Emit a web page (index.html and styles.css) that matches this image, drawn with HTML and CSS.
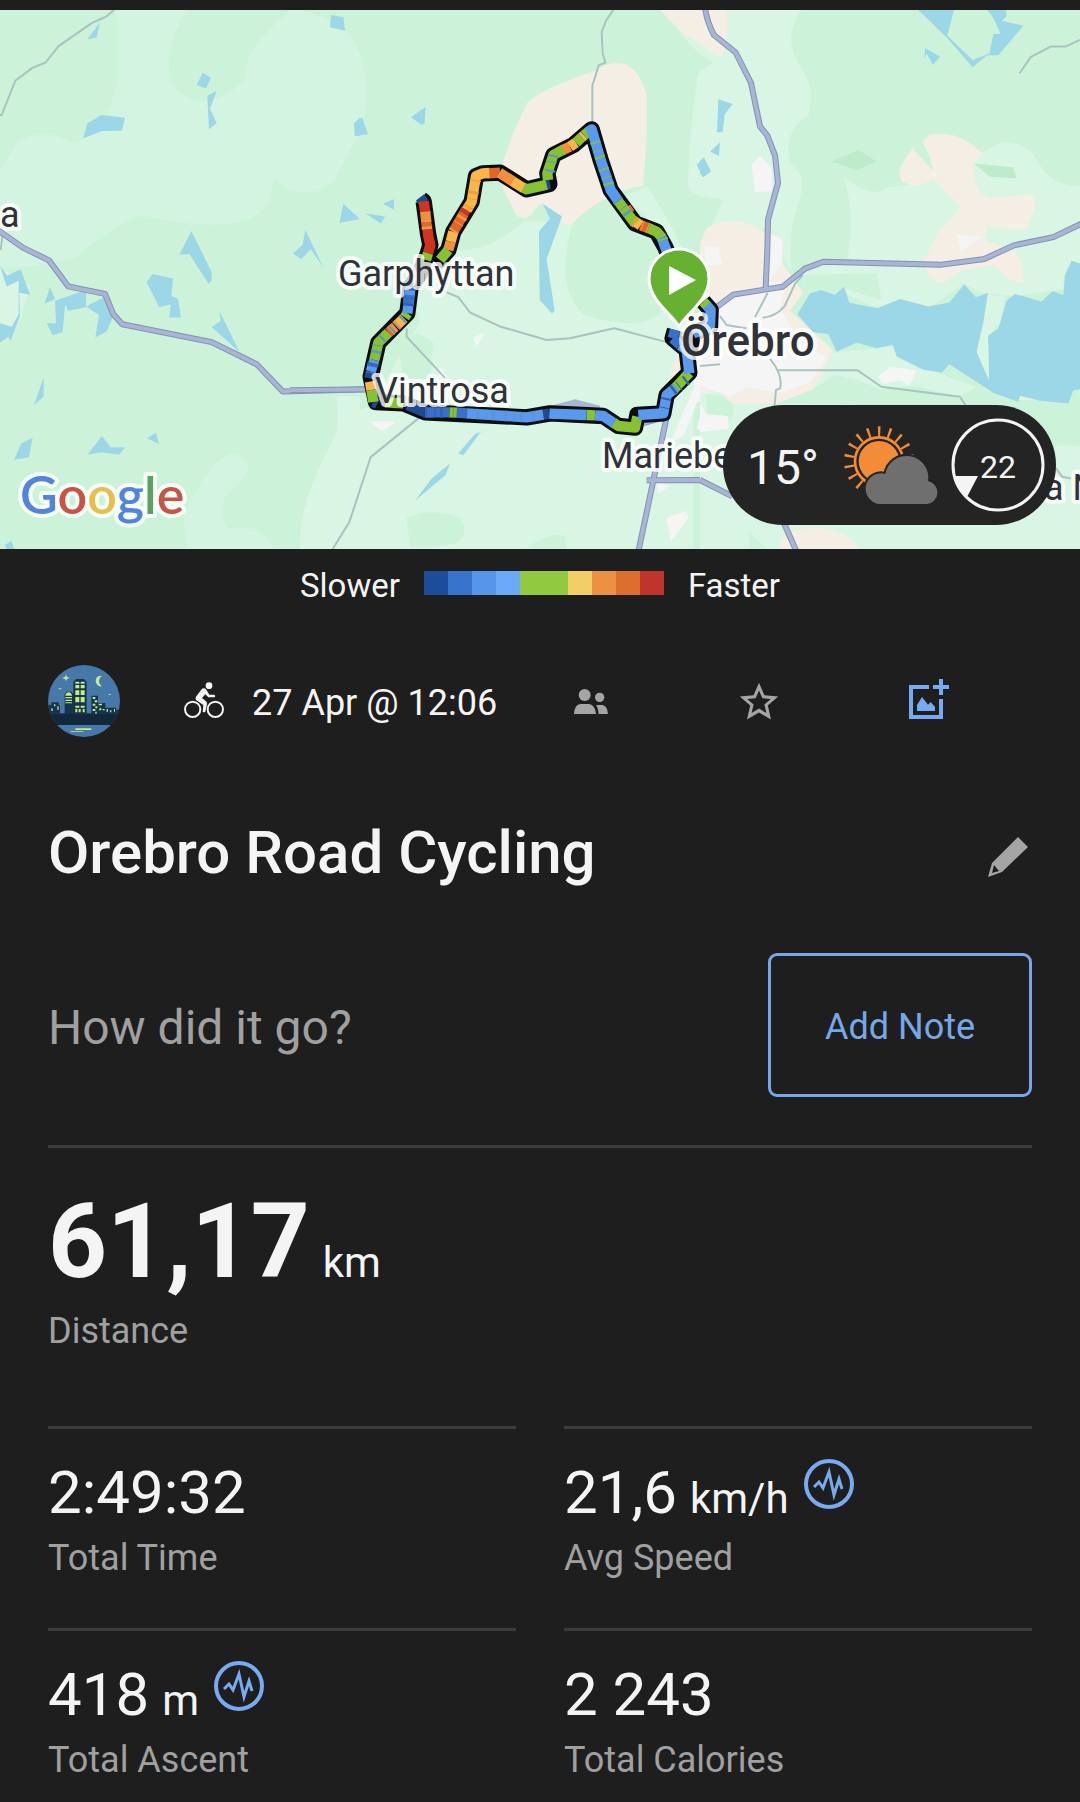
FILE: index.html
```html
<!DOCTYPE html>
<html lang="en">
<head>
    <meta charset="UTF-8">
    <meta name="viewport" content="width=device-width, initial-scale=1.0">
    <title>Orebro Road Cycling</title>
    <link rel="stylesheet" href="styles.css">
</head>
<body>
    <section class="map">
        <svg class="map-canvas" viewBox="0 10 1080 539" preserveAspectRatio="xMidYMid slice" role="img" aria-label="Route map">
            <rect class="forest" x="0" y="10" width="1080" height="539"/>

            <!-- west -->
            <g transform="scale(.33333 .35714)">
                <path class="field-soft" d="M345 28Q370 200 330 300Q290 380 220 400Q120 350 50 400L0 480V750Q120 750 230 720Q350 620 430 605Q600 640 700 625Q820 610 820 500Q900 570 1000 510Q1060 400 1080 380Q1130 200 1050 100Q1000 50 900 28H870Q720 150 730 230Q600 330 520 240Q480 150 560 28z"/>
                <path class="field" d="M0 750L90 800L60 900L0 960zM1080 1110H1010Q1030 1250 950 1330Q900 1420 900 1537H1080z"/>
                <path class="field-soft" d="M550 1440Q640 1270 700 1270Q780 1290 720 1350Q640 1400 680 1480Q800 1470 820 1537H560z"/>
                <path class="water" d="M262 110L300 62L290 105zM993 42L1030 48L1035 86L990 76zM608 204L633 218L618 248L590 238zM622 268L650 255L630 305L650 345L627 362zM249 388L262 346L304 322L375 330L366 366L306 367zM1062 345L1080 330V380H1068zM1030 571L1078 614L1019 624zM574 647L635 762V785L626 795L568 711L538 713zM916 644L970 748L932 698L904 726L879 710L908 685zM440 790L457 767L519 780L514 828L534 837L543 889H508L512 852L478 860zM658 870L718 985L635 916L662 898zM0 745L22 772L62 754L90 825L58 820L60 885L32 955L24 943L0 960V905L35 915L56 880V786L20 802zM150 803L165 838L134 850zM165 842L258 812V860L205 870L195 852L188 930L158 938L140 905L168 905zM258 858L312 832L340 885L320 928L286 945L297 882zM131 1056V1110L102 1134zM64 1242L98 1226L87 1280L42 1288zM262 1273L306 1221L332 1252H375L358 1273L306 1266zM441 1227L468 1212L477 1243zM15 1525L35 1515L42 1537H20z"/>
                <path class="trail" d="M342 28L318 47L276 64L175 130L137 175L97 190L46 226L5 322H0M8 655L2 700"/>
                <path class="road-edge" d="M-5 645L70 694L147 729L205 802L315 823L340 880L367 908L635 958L770 1020L848 1096L1110 1090"/>
                <path class="road" d="M-5 645L70 694L147 729L205 802L315 823L340 880L367 908L635 958L770 1020L848 1096L1110 1090"/>
            </g>

            <!-- centre -->
            <g transform="translate(300) scale(.33333 .35714)">
                <path class="field" d="M400 700Q560 720 670 620L820 620Q1000 540 1040 520Q1100 600 1180 760V1537H0Q0 1400 100 1230Q130 1150 210 1140L360 900Q330 800 400 700zM1190 210Q1240 160 1320 180V560Q1200 560 1165 530Q1160 430 1190 210zM940 28H1320V200Q1180 180 1100 28z"/>
                <path class="forest" d="M820 620Q760 800 850 880Q1000 930 1080 880L1090 700Q1040 560 930 560zM320 1450Q400 1420 480 1450Q510 1490 470 1520Q390 1540 330 1530zM680 1537Q740 1490 795 1500L800 1537zM300 1000Q330 900 400 960L390 1060H310zM940 28H1080Q1150 100 1195 200Q1160 430 1165 530L1040 520V270Q1000 130 916 176z"/>
                <path class="sand" d="M880 200Q1000 130 1040 265V370L1030 520Q960 530 910 560Q850 590 820 625Q790 635 770 610L720 570L690 605Q650 620 640 585L610 530V450L640 370L680 290Q720 250 880 200zM1080 28H1270L1280 110L1260 160Q1190 110 1150 95zM1220 650Q1260 610 1320 625V1140Q1290 1130 1250 1060L1120 1080Q1100 1020 1140 990L1240 900z"/>
                <path class="town" d="M1215 688L1255 690L1262 740L1320 780V1110L1280 1080L1240 1100L1190 1130L1150 1220L1110 1240L1180 1090L1200 980L1240 860zM1190 1200L1215 1120L1320 1160V1205H1200zM520 945L555 930L530 970zM210 1180L290 1180L245 1208zM420 1025L445 1060L410 1060zM1070 1350L1110 1360L1075 1382zM1100 1450L1160 1430L1165 1450L1112 1518z"/>
                <path class="water" d="M186 328L204 376L164 381L163 350zM377 299L374 345L365 350L333 328zM130 571L178 612L119 624zM282 558V588L249 570zM197 598L255 606L243 626zM727 570L786 606L740 725L764 870L756 878L719 840L717 648L750 612zM1254 278L1298 291L1274 330L1270 370H1252zM1260 398L1257 437L1231 424zM1212 441L1233 480L1210 496L1190 462zM450 1298L437 1330L345 1402L395 1340zM565 1203L540 1212L490 1275L475 1270L525 1215z"/>
                <path class="trail" d="M940 28L918 58L905 90L908 150L916 175L896 183L877 240V345M390 800L475 832L510 875L600 914L740 952L810 947L943 919L1100 958M320 920V943L435 1058M360 1168L212 1280L148 1462L98 1537"/>
                <path class="road-edge" d="M1215 20L1240 95L1305 145M-30 1093L210 1090M1104 1150L1015 1545M1040 1345L1213 1344L1320 1400M1030 1185L1104 1165"/>
                <path class="road" d="M1215 20L1240 95L1305 145M-30 1093L210 1090M1104 1150L1015 1545M1040 1345L1213 1344L1320 1400M1030 1185L1104 1165"/>
                <path class="bypass" d="M745 1138L825 1118L900 1136V1150H745z"/>
            </g>

            <!-- east -->
            <g transform="translate(700) scale(.33333 .35714)">
                <path class="field" d="M50 28H305Q240 110 310 200Q345 250 325 325Q250 360 270 460Q325 490 300 550Q260 660 275 760L200 640L20 660L80 540L0 550V200L80 150zM430 495Q520 560 560 525Q640 520 700 500L900 400Q950 390 1000 430Q1050 530 1140 518V740Q1090 730 1090 810L940 830L850 820L790 795L690 860L600 840L530 860L450 830Q400 780 310 800L300 750L440 735Q470 600 430 495zM280 960L380 990L580 970L700 1040L850 1090L1140 1130V1537H0V1100H230z"/>
                <path class="forest" d="M230 1130Q350 1090 400 1050Q480 1060 540 1090L640 1080L780 1110L850 1070L950 1120L1140 1120V1250Q1080 1240 1040 1260L900 1140zM300 770L530 765L545 840L440 810L320 810zM20 1105L100 1110V1160L85 1180L20 1160zM148 1490L200 1537H148z"/>
                <path class="grove" d="M396 453L475 420L530 452L470 477zM822 458L940 468L950 500L870 495z"/>
                <path class="sand" d="M0 28H80Q90 90 65 160L0 95zM660 400L690 376Q760 370 800 395L848 428L820 460Q820 540 870 555L990 543Q1010 550 1005 580L980 640Q950 650 865 633L850 670L940 700Q980 740 965 790L930 785L880 740L780 760L735 790L690 780L670 730L715 650L770 595L780 575L735 535L700 500Q660 530 610 512Q590 490 605 460L640 412zM20 640Q60 610 140 625Q230 650 250 740L310 820L270 870L400 980L340 1090L230 1130H95L60 1100L0 1100V680zM240 1510Q310 1460 400 1485Q460 1500 475 1537H240z"/>
                <path class="forest" d="M665 392L640 418L700 480L690 440z"/>
                <path class="town" d="M155 460L180 436L215 470V535L165 538zM15 690H55L65 740L15 745zM210 655L248 670L245 740L200 790L260 790L240 860L300 960L380 1000L330 1070L240 1100L180 1090L140 1085L90 1110L0 1080V850L60 850L110 820L200 800zM0 1130L20 1160L85 1165V1200L0 1210zM770 657L845 663L785 703zM533 1055L570 1027L650 1037L628 1080L600 1065L550 1075zM695 484L710 484L704 497z"/>
                <path class="water" d="M655 28H762L742 100L818 168L868 150L880 95H902L880 50L862 28H918L920 45L905 58L970 72L895 155L862 155L818 188L740 105zM676 135L720 158L699 182L680 150L672 165zM292 880L330 822L362 812L405 825L432 803L448 848L533 863L600 837L685 858L748 847L793 796L828 832L864 820L850 900L830 985L867 1065L864 940L895 920L920 842L945 823L1025 844L1058 815L1090 827L1095 770L1115 730L1140 738V1090L1120 1093L1105 1130L1020 1122L960 1108L955 1125L880 1100L748 1020L726 1043L670 1035L590 998L578 965L530 975L470 960L410 985L385 935L340 930zM55 278L98 291L74 320L68 370H51zM60 398L57 437L31 424zM12 441L33 480L10 496L0 485V450z"/>
                <path class="field" d="M864 825L915 830L900 905L864 940L867 1065L830 985L852 900z"/>
                <path class="trail" d="M1140 112L1098 130H1053L992 160L959 205M308 770L285 795L254 857Q230 885 188 890M203 820L165 888M60 885L80 910L140 920M210 1005Q250 1050 240 1088L228 1092L223 1140M230 1037H473L544 1083L780 1111L800 1140M0 1025L60 1020M1067 1310L1087 1335L1112 1340"/>
                <path class="road-edge" d="M15 20Q20 60 42 98L107 147L153 232L180 354L202 380L225 435L234 512L204 615L202 700L197 805M50 860L100 825L248 803L315 752L370 733L725 741L853 725L942 687L1060 664L1145 626M0 1344L97 1390M240 1440L290 1545"/>
                <path class="road" d="M15 20Q20 60 42 98L107 147L153 232L180 354L202 380L225 435L234 512L204 615L202 700L197 805M50 860L100 825L248 803L315 752L370 733L725 741L853 725L942 687L1060 664L1145 626M0 1344L97 1390M240 1440L290 1545"/>
            </g>

            <!-- speed coloured track -->
            <g class="track" transform="translate(320 100) scale(.33333)">
                <path class="track-edge" d="M303 298L311 304L320 370L324 400L331 435L322 465L300 520L272 560L262 640L175 728L152 830L168 906L250 910L315 937L620 952L690 940L850 948L895 978L945 983L952 945L1030 940L1040 885L1108 818L1100 750L1058 715L1065 690M348 490L385 450L400 395L455 305L468 228L488 220L540 218L620 268L688 252L682 220L700 165L760 135L815 88L842 180L872 270L945 370L1010 395L1035 440L1060 500M1150 605L1172 630L1170 680L1120 700L1110 750"/>
                <path class="v1" d="M300 292L312 308M262 600L266 570M148 835L152 815M160 906L172 912M262 915L315 937L340 938M670 944L688 941M678 254L690 252"/>
                <path class="v9" d="M311 304L316 340M322 385L325 410L331 435L324 460M432 340L440 325"/>
                <path class="v8" d="M318 365L322 385M505 220L540 218M215 690L205 698M962 376L985 384M918 322L930 340M400 395L432 340"/>
                <path class="v7" d="M316 340L319 366M385 450L392 425M538 218L580 245M728 150L750 140M226 680L214 690"/>
                <path class="v6" d="M392 425L400 395M440 330L455 305L468 228L488 220L508 219M578 244L612 265M750 140L768 128M785 112L792 106M252 655L228 678M940 362L962 376M150 845L154 870"/>
                <path class="v5" d="M324 460L318 480M360 480L385 450M610 263L620 268L680 254M684 240L682 220L700 165L730 149M768 128L785 112M792 106L808 93M892 300L945 370M985 384L1010 395L1028 415M262 640L254 652M205 698L175 728L163 780M154 870L160 906M195 907L250 910M388 937L412 938M800 945L825 946M880 968L895 978L945 983L952 950M1150 605L1162 618M1108 818L1065 865"/>
                <path class="v4" d="M804 97L815 88L842 180L872 270L895 303M1025 412L1035 440L1045 465M440 940L620 952L670 944M688 941L800 945M825 946L850 948L882 970M955 945L1030 940L1040 885L1068 863M1108 820L1100 750L1080 735M272 560L262 640M163 780L152 815M1160 616L1172 630L1170 680L1120 700"/>
                <path class="v2" d="M315 937L388 937M410 938L442 940M1058 715L1065 690M1058 715L1080 735M264 610L267 585M156 800L158 790"/>
                <path class="stripe s-green" d="M825 125L842 180L872 270M1100 840L1045 882M1028 415L1035 440"/>
                <path class="stripe s-blue" d="M892 300L935 355M690 215L700 165M250 655L175 728L152 830M470 942L620 952L670 944M1168 625L1170 680"/>
                <path class="stripe s-orange" d="M316 335L322 400M400 395L455 305L468 240M235 672L205 700M940 366L985 384"/>
                <path class="stripe s-navy" d="M315 937L400 938M270 565L264 630M160 790L150 830M1100 840L1040 885L1030 930"/>
            </g>

            <g class="labels">
                <text x="0" y="227">a</text>
                <text x="338" y="286">Garphyttan</text>
                <text x="375" y="403">Vintrosa</text>
                <text x="602" y="468">Mariebe</text>
                <text x="1044" y="500">a N</text>
                <text class="city" x="681" y="356">Örebro</text>
                <text class="google" x="20" y="514"><tspan class="g-blue">G</tspan><tspan class="g-red">o</tspan><tspan class="g-yellow">o</tspan><tspan class="g-blue">g</tspan><tspan class="g-green">l</tspan><tspan class="g-red">e</tspan></text>
            </g>

            <!-- start pin -->
            <path class="pin" d="M679 327C673 315 649 300 649 279A30 30 0 0 1 709 279C709 300 685 315 679 327z"/>
            <path fill="#fff" d="M669 266L696 280L669 295z"/>
        </svg>

        <div class="weather">
            <span class="temp">15°</span>
            <svg class="sky" viewBox="426 96 300 258" aria-hidden="true">
                <circle cx="534" cy="214" r="61" fill="#f28c38"/>
                <circle cx="534" cy="214" r="72" fill="none" stroke="#f28c38" stroke-width="8"/>
                <circle cx="534" cy="214" r="90" fill="none" stroke="#f28c38" stroke-width="30" stroke-dasharray="7 24.4" stroke-dashoffset="-12.2"/>
                <path d="M538 342A46 46 0 1 1 553 252A64 64 0 0 1 681 273A35 35 0 0 1 679 342z" fill="#6f6f6f" stroke="#242424" stroke-width="12" paint-order="stroke"/>
            </svg>
            <div class="wind">
                <svg viewBox="0 0 94 94" aria-hidden="true">
                    <circle cx="47" cy="47" r="45" fill="none" stroke="#f4f4f4" stroke-width="3"/>
                    <path d="M4 58H27L16 79Q7 71 4 58z" fill="#f4f4f4"/>
                </svg>
                <span>22</span>
            </div>
        </div>
    </section>

    <div class="legend">
        <span>Slower</span>
        <div class="scale">
            <i class="c1"></i><i class="c2"></i><i class="c3"></i><i class="c4"></i><i class="c5"></i><i class="c5"></i><i class="c6"></i><i class="c7"></i><i class="c8"></i><i class="c9"></i>
        </div>
        <span>Faster</span>
    </div>

    <main>
        <div class="activity">
            <svg class="avatar" viewBox="0 0 216 216" role="img" aria-label="Profile picture">
                <clipPath id="round"><circle cx="108" cy="108" r="108"/></clipPath>
                <g clip-path="url(#round)">
                    <rect width="216" height="216" fill="#4678aa"/>
                    <path fill="#16344b" d="M0 180V120H10V112H32V120H36V145H50V88L56 80H70L76 86V50L84 42H108L116 50V145H130V92H150V114H172V128H204V134H216V180z"/>
                    <path fill="#12293c" d="M0 148H216V180H0z"/>
                    <path fill="#c6ea86" d="M82 50H94V56H82zM98 50H110V56H98zM82 60H94V70H82zM98 60H110V70H98zM82 76H94V90H82zM98 76H110V90H98zM82 96H94V112H82zM98 96H110V112H98zM82 122H94V128H82zM98 122H110V128H98zM82 132H88V142H82zM92 132H98V142H92zM104 132H110V142H104zM52 92Q54 82 62 82Q70 82 72 92zM52 96H72V100H52zM52 104H72V108H52zM52 112H72V115H52zM134 96H142V102H134zM140 106H148V112H140zM134 116H142V122H134zM142 124H148V130H142zM134 132H142V138H134zM142 140H146V146H142zM152 116H162V121H152zM154 130H160V136H154zM164 132H170V136H164zM176 132H180V140H176zM186 136H190V142H186zM198 132H201V140H198zM10 130H14V138H10zM18 118H22V124H18zM28 124H32V134H28z"/>
                    <path fill="#c6ea86" d="M162 32Q142 32 143 48Q145 66 162 64Q153 58 153 48Q153 38 162 32zM54 28L57 36L65 39L57 42L54 48L51 42L42 39L51 36zM32 70H40V73H32zM182 87H188V90H182zM82 190H130V195H82zM68 198H106V200H68z"/>
                </g>
            </svg>
            <svg class="icon bike" viewBox="0 0 144 144" role="img" aria-label="Cycling">
                <circle cx="38" cy="97" r="23" fill="none" stroke="#f4f4f4" stroke-width="6"/>
                <circle cx="106" cy="97" r="23" fill="none" stroke="#f4f4f4" stroke-width="6"/>
                <circle cx="87" cy="26" r="10" fill="#f4f4f4"/>
                <path d="M66 35Q73 31 79 38L88 53H103Q108 57 104 61H85L76 52L66 63L78 73Q82 76 81 81L76 104Q72 108 68 104L70 84L48 69Q45 65 48 59z" fill="#f4f4f4"/>
            </svg>
            <time class="date">27 Apr @ 12:06</time>
            <div class="actions">
                <button type="button" aria-label="Participants">
                    <svg class="icon" viewBox="0 0 144 144" fill="#a5a5a5">
                        <circle cx="53" cy="54" r="18"/>
                        <circle cx="98" cy="61" r="14"/>
                        <path d="M21 111Q23 81 41 81H67Q84 84 87 111zM87 84H107Q121 87 123 111H95Q93 92 87 84z"/>
                    </svg>
                </button>
                <button type="button" aria-label="Favourite">
                    <svg class="icon" viewBox="0 0 24 24" fill="#a5a5a5">
                        <path d="M21.6 9.7l-6.9-.6L12 2.9 9.3 9.1l-6.900.6 5.2 4.6L6 21.3l6-3.6 6 3.6-1.600-7zM12 15.800l-3.700 2.200 1-4.200-3.200-2.800 4.200-.4L12 6.800l1.700 3.800 4.200.4-3.200 2.800 1 4.200z"/>
                    </svg>
                </button>
                <button type="button" aria-label="Add photo">
                    <svg class="icon" viewBox="0 0 144 144" fill="#77aaf0">
                        <path d="M18 24H78V36H30V114H108V66H120V126H18zM108 6H120V24H138V36H120V54H108V36H90V24H108zM42 102V84L57 60L75 83L83 75L96 90V102z"/>
                    </svg>
                </button>
            </div>
        </div>

        <div class="title-row">
            <h1>Orebro Road Cycling</h1>
            <button type="button" aria-label="Edit title">
                <svg class="icon" viewBox="0 0 48 48" fill="#a5a5a5">
                    <path fill-rule="evenodd" d="M4 48L8 34L34 8L44 18L18 43zM8 44L15 42L10 36z"/>
                </svg>
            </button>
        </div>

        <div class="note-row">
            <p>How did it go?</p>
            <button class="note-btn" type="button">Add Note</button>
        </div>

        <section class="distance">
            <div class="value">61,17 <span class="unit">km</span></div>
            <div class="label">Distance</div>
        </section>

        <section class="stats">
            <div class="stat">
                <div class="value">2:49:32</div>
                <div class="label">Total Time</div>
            </div>
            <div class="stat">
                <div class="value">21,6 <span class="unit">km/h</span>
                    <button class="graph-btn" type="button" aria-label="Speed graph">
                        <svg viewBox="0 0 54 54" fill="none" stroke="#77aaf0">
                            <circle cx="27" cy="27" r="23" stroke-width="4"/>
                            <path stroke-width="3" d="M12 30L17 25L21 31L27 15L32 38L37 22L40 32"/>
                        </svg>
                    </button>
                </div>
                <div class="label">Avg Speed</div>
            </div>
            <div class="stat">
                <div class="value">418 <span class="unit">m</span>
                    <button class="graph-btn" type="button" aria-label="Ascent graph">
                        <svg viewBox="0 0 54 54" fill="none" stroke="#77aaf0">
                            <circle cx="27" cy="27" r="23" stroke-width="4"/>
                            <path stroke-width="3" d="M12 30L17 25L21 31L27 15L32 38L37 22L40 32"/>
                        </svg>
                    </button>
                </div>
                <div class="label">Total Ascent</div>
            </div>
            <div class="stat">
                <div class="value">2 243</div>
                <div class="label">Total Calories</div>
            </div>
        </section>
    </main>
</body>
</html>
```
FILE: styles.css
```css
* {
    box-sizing: border-box;
}
body {
    margin: 0;
    padding-top: 10px;
    min-height: 100vh;
    background-color: #1e1e1e;
    color: #f4f4f4;
    font-family: Roboto, Arial, sans-serif;
}
button {
    padding: 0;
    border: none;
    background: none;
    font-family: inherit;
    cursor: pointer;
}
svg {
    display: block;
}
h1, p {
    margin: 0;
}

/* map */
.map {
    position: relative;
}
.map-canvas {
    width: 100%;
}
.forest { fill: #ccf2da; }
.field { fill: #d9f5e3; }
.field-soft { fill: #d2f4e0; }
.grove { fill: #bdebcb; }
.sand { fill: #f4eee5; }
.town { fill: #f5f5f5; }
.water { fill: #9cd7e7; }
.bypass { fill: #a8b6d3; }
.trail, .road, .road-edge {
    fill: none;
    stroke-linejoin: round;
    vector-effect: non-scaling-stroke;
}
.trail {
    stroke: #a9c3c0;
    stroke-width: 2px;
}
.road-edge {
    stroke: #8490b8;
    stroke-width: 6px;
}
.road {
    stroke: #a8b6d3;
    stroke-width: 4px;
}
.track path {
    fill: none;
    stroke-width: 31px;
    stroke-linejoin: round;
}
.track .track-edge {
    stroke: #0b0d10;
    stroke-width: 49px;
}
.v1 { stroke: #1f4a8f; }
.v2 { stroke: #3a70c8; }
.v4 { stroke: #5a9aee; }
.v5 { stroke: #86c232; }
.v6 { stroke: #f7b74a; }
.v7 { stroke: #f08f3c; }
.v8 { stroke: #e2662b; }
.v9 { stroke: #cf3322; }
.track .stripe {
    stroke-dasharray: 6 22 3 14 8 31;
}
.s-green { stroke: #7dbb5a; }
.s-blue { stroke: #5b95cf; }
.s-orange { stroke: #f39a3d; }
.s-navy { stroke: #2f62b4; }
.labels text {
    fill: #303238;
    stroke: rgba(255, 255, 255, 0.8);
    stroke-width: 8px;
    stroke-linejoin: round;
    paint-order: stroke;
    font-size: 36px;
}
.labels .city {
    font-size: 44px;
    font-weight: 500;
}
.labels .google {
    font-family: Lato, sans-serif;
    font-size: 52px;
    font-weight: 600;
}
.google .g-blue { fill: #5383dc; }
.google .g-red { fill: #c85444; }
.google .g-yellow { fill: #e7bf4f; }
.google .g-green { fill: #5ba15f; }
.pin {
    fill: #67b132;
    stroke: #fff;
    stroke-width: 3px;
}

/* weather badge over the map */
.weather {
    position: absolute;
    right: 24px;
    bottom: 24px;
    display: flex;
    align-items: center;
    height: 120px;
    padding: 0 11px 0 24px;
    border-radius: 60px;
    background-color: #242424;
}
.temp {
    font-size: 48px;
    margin-right: 24px;
}
.sky {
    width: 100px;
    height: 86px;
    margin-right: 8px;
}
.wind {
    display: grid;
    place-items: center;
    width: 94px;
    height: 94px;
    font-size: 32px;
}
.wind > * {
    grid-area: 1 / 1;
}

/* legend */
.legend {
    display: flex;
    align-items: center;
    justify-content: center;
    gap: 24px;
    height: 68px;
    font-size: 33px;
}
.scale {
    display: flex;
}
.scale i {
    width: 24px;
    height: 24px;
}
.c1 { background-color: #1c4c9c; }
.c2 { background-color: #3874cb; }
.c3 { background-color: #5596ea; }
.c4 { background-color: #6aa8f8; }
.c5 { background-color: #91c941; }
.c6 { background-color: #f2ce67; }
.c7 { background-color: #eb9141; }
.c8 { background-color: #dd6e2d; }
.c9 { background-color: #c0352b; }

/* Roboto sits a little high in its line box */
.temp, .wind span, .legend span, .date, .note-row p, .note-btn {
    padding-top: 4px;
}

main {
    padding: 48px 48px 20px;
}
.icon {
    width: 48px;
    height: 48px;
}
.activity {
    display: flex;
    align-items: center;
    font-size: 36px;
}
.avatar {
    width: 72px;
    height: 72px;
}
.bike {
    margin: 0 24px 0 60px;
}
.date {
    white-space: nowrap;
}
.actions {
    display: flex;
    margin: 0 21px 0 auto;
}
.actions button {
    display: flex;
    justify-content: center;
    width: 168px;
}

.title-row {
    display: flex;
    align-items: center;
    justify-content: space-between;
    margin-top: 80px;
}
h1 {
    font-size: 60px;
    font-weight: 500;
    line-height: 72px;
}
.note-row {
    display: flex;
    align-items: center;
    justify-content: space-between;
    margin-top: 64px;
    padding-bottom: 48px;
    border-bottom: 3px solid #3b3b3b;
}
.note-row p {
    color: #a0a0a0;
    font-size: 48px;
}
.note-btn {
    width: 264px;
    height: 144px;
    border: 3px solid #77a7e8;
    border-radius: 9px;
    color: #77a7e8;
    font-size: 36px;
}

.value {
    display: flex;
    align-items: baseline;
    gap: 13px;
    font-size: 60px;
    line-height: 72px;
}
.unit {
    font-size: 42px;
    line-height: 48px;
}
.label {
    margin-top: 8px;
    color: #a0a0a0;
    font-size: 36px;
    line-height: 42px;
}
.distance {
    padding: 34px 0 74px;
}
.distance .value {
    font-size: 103px;
    font-weight: 700;
    line-height: 120px;
}
.distance .unit {
    font-weight: 400;
}
.stats {
    display: grid;
    grid-template-columns: 1fr 1fr;
    gap: 49px 48px;
}
.stat {
    padding-top: 28px;
    border-top: 3px solid #3b3b3b;
}
.graph-btn {
    align-self: flex-start;
    width: 54px;
    height: 54px;
}
```
